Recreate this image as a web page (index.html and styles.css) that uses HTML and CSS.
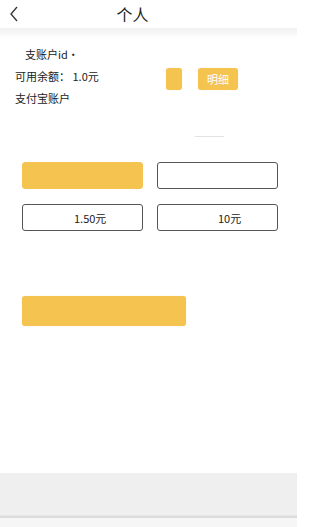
FILE: index.html
```html
<!DOCTYPE html>
<html lang="zh">
<head>
<meta charset="utf-8">
<link rel="stylesheet" href="styles.css">
</head>
<body>
<div class="page">
  <header class="topbar">
    <svg class="back" width="10" height="16" viewBox="0 0 10 16"><path d="M8 1 L2 8 L8 15" fill="none" stroke="#333" stroke-width="1.3"/></svg>
    <div class="title">个人</div>
  </header>
  <div class="shadow"></div>
  <main class="content">
    <div class="info">
      <div class="lines">
        <div class="line id">支账户id·</div>
        <div class="line">可用余额： 1.0元</div>
        <div class="line">支付宝账户</div>
      </div>
      <div class="btns">
        <div class="ybtn small"></div>
        <div class="ybtn detail">明细</div>
      </div>
    </div>
    <div class="sep-row"><div class="sep"></div></div>
    <div class="grid">
      <div class="cell filled"></div>
      <div class="cell"></div>
      <div class="cell"><span class="amt a1">1.50元</span></div>
      <div class="cell"><span class="amt a2">10元</span></div>
    </div>
    <div class="submit"></div>
  </main>
  <footer class="bottom">
    <div class="bline"></div>
    <div class="btail"></div>
  </footer>
</div>
</body>
</html>
```
FILE: styles.css
```css
html, body { margin: 0; padding: 0; background: #fff; overflow: hidden; }
body { font-family: "Noto Sans CJK SC", "Noto Sans", sans-serif; color: #222; }
.page { width: 297px; height: 527px; display: flex; flex-direction: column; overflow: hidden; }
.topbar { height: 28px; display: flex; align-items: center; position: relative; background: #fff; }
.back { margin-left: 9px; }
.title { position: absolute; left: 0; right: 0; text-align: center; font-size: 16px; line-height: 28px; padding-right: 32px; color: #222; }
.shadow { height: 10px; background: linear-gradient(#f1f1f1, #f8f8f8 60%, #fff); }
.content { flex: 1; display: flex; flex-direction: column; }
.info { display: flex; padding-top: 5px; }
.lines { display: flex; flex-direction: column; padding-left: 15px; width: 151px; }
.line { font-size: 11px; line-height: 22px; height: 22px; }
.line.id { padding-left: 10px; }
.btns { display: flex; gap: 16px; padding-top: 25px; }
.ybtn { height: 22px; background: #f4c350; border-radius: 3px; box-shadow: 0 0 1px #f8dc9c; color: #fff; font-size: 11px; line-height: 22px; text-align: center; }
.ybtn.small { width: 16px; }
.ybtn.detail { width: 40px; }
.sep-row { height: 28px; display: flex; align-items: flex-end; padding-left: 195px; }
.sep { width: 29px; height: 1px; background: #e3e3e3; }
.grid { display: grid; grid-template-columns: 121px 121px; column-gap: 14px; row-gap: 15px; padding: 25px 0 0 22px; }
.cell { height: 25px; border: 1px solid #555; border-radius: 3px; display: flex; align-items: center; font-size: 11px; color: #222; }
.cell.filled { border-color: #f4c350; background: #f4c350; }
.amt.a1 { margin-left: 51px; }
.amt.a2 { margin-left: 60px; }
.submit { margin: 65px 0 0 22px; width: 164px; height: 30px; background: #f4c350; border-radius: 3px; box-shadow: 0 0 1px #f8dc9c; }
.bottom { height: 54px; background: #efefef; display: flex; flex-direction: column; justify-content: flex-end; }
.bline { height: 2px; background: #dcdcdc; border-top: 1px solid #e6e6e6; }
.btail { height: 9px; background: #f6f6f6; }
```
